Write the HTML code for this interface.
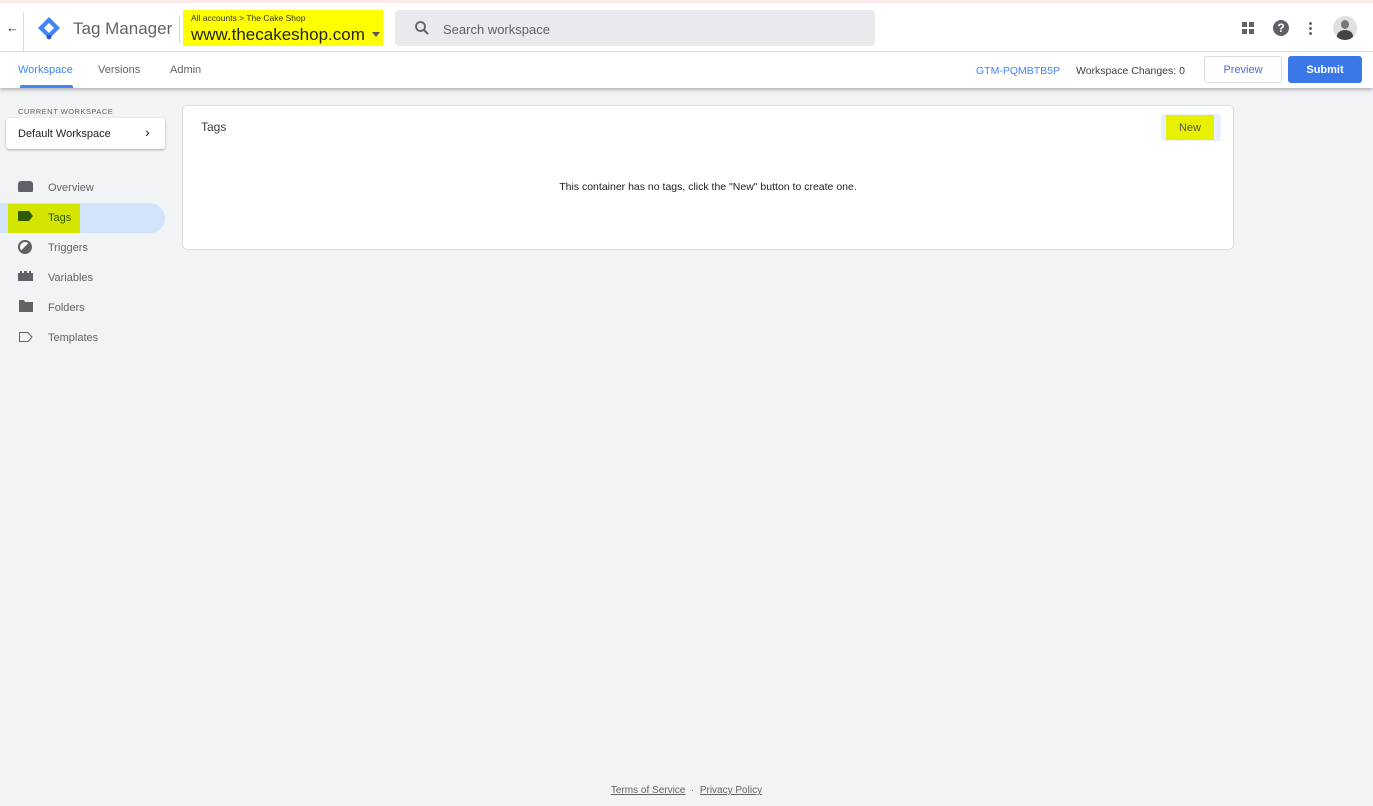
<!DOCTYPE html>
<html><head><meta charset="utf-8"><style>
*{box-sizing:border-box;margin:0;padding:0}
body{width:1373px;height:806px;background:#f1f3f4;font-family:"Liberation Sans",sans-serif;position:relative;overflow:hidden;color:#3c4043}
.abs{position:absolute}
#top{left:0;top:0;width:1373px;height:52px;background:#fff;border-top:3px solid #fbe9e7;border-bottom:1px solid #dadce0}
#sub{left:0;top:52px;width:1373px;height:36px;background:#fff;box-shadow:0 2px 3px rgba(0,0,0,.25)}
.nav{font-size:11px;color:#5f6368;left:48px}
</style></head><body>
<div id="top" class="abs"></div>
<div class="abs" style="left:23px;top:12px;width:1px;height:40px;background:#dadce0"></div>
<div class="abs" style="left:6px;top:20px;font-size:13px;color:#333">←</div>
<svg class="abs" style="left:37px;top:16px" width="24" height="24" viewBox="0 0 24 24"><path d="M12 1 L23 12 L12 23 L1 12Z" fill="#4285f4"/><path d="M12 7 L17 12 L12 17 L7 12Z" fill="#fff"/><circle cx="12" cy="21" r="2.4" fill="#2a56c6"/></svg>
<div class="abs" style="left:73px;top:19px;font-size:17px;color:#5f6368">Tag Manager</div>
<div class="abs" style="left:179px;top:16px;width:1px;height:28px;background:#dadce0"></div>
<div class="abs" style="left:183px;top:10px;width:200px;height:36px;background:#ffff00"></div>
<div class="abs" style="left:191px;top:13px;font-size:8.5px;color:#333">All accounts &gt; The Cake Shop</div>
<div class="abs" style="left:191px;top:25px;font-size:17px;color:#222">www.thecakeshop.com</div>
<div class="abs" style="left:372px;top:32px;border:4px solid transparent;border-top:5px solid #555"></div>
<div class="abs" style="left:395px;top:10px;width:480px;height:36px;background:#e8eaed;border-radius:4px"></div>
<svg class="abs" style="left:414px;top:20px" width="16" height="16" viewBox="0 0 16 16"><circle cx="6.5" cy="6.5" r="4.5" fill="none" stroke="#5f6368" stroke-width="1.8"/><path d="M10 10L14 14" stroke="#5f6368" stroke-width="2"/></svg>
<div class="abs" style="left:443px;top:22px;font-size:13px;color:#5f6368">Search workspace</div>
<svg class="abs" style="left:1241px;top:21px" width="14" height="14"><rect x="1" y="1" width="5" height="5" fill="#5f6368"/><rect x="8" y="1" width="5" height="5" fill="#5f6368"/><rect x="1" y="8" width="5" height="5" fill="#5f6368"/><rect x="8" y="8" width="5" height="5" fill="#5f6368"/></svg>
<div class="abs" style="left:1273px;top:20px;width:16px;height:16px;border-radius:50%;background:#5f6368;color:#fff;font-size:12px;font-weight:bold;text-align:center;line-height:16px">?</div>
<div class="abs" style="left:1309px;top:21px;width:3px;height:14px;background:radial-gradient(circle,#5f6368 1.3px,transparent 1.6px) 0 0/3px 5px"></div>
<div class="abs" style="left:1333px;top:16px;width:24px;height:24px;border-radius:50%;background:#e0e0e0;overflow:hidden"><div style="position:absolute;left:8px;top:4px;width:8px;height:9px;border-radius:50%;background:#777"></div><div style="position:absolute;left:4px;top:14px;width:16px;height:12px;border-radius:50% 50% 0 0;background:#444"></div></div>
<div id="sub" class="abs"></div>
<div class="abs" style="left:18px;top:64px;font-size:11px;color:#4285f4">Workspace</div>
<div class="abs" style="left:20px;top:85px;width:53px;height:3px;background:#4285f4;border-radius:2px 2px 0 0"></div>
<div class="abs" style="left:98px;top:64px;font-size:11px;color:#5f6368">Versions</div>
<div class="abs" style="left:170px;top:64px;font-size:11px;color:#5f6368">Admin</div>
<div class="abs" style="left:976px;top:65px;font-size:10.5px;color:#4285f4">GTM-PQMBTB5P</div>
<div class="abs" style="left:1076px;top:65px;font-size:10.5px;color:#3c4043">Workspace Changes: 0</div>
<div class="abs" style="left:1204px;top:56px;width:78px;height:27px;border:1px solid #dadce0;border-radius:3px;font-size:11px;color:#4a67e0;text-align:center;line-height:27px">Preview</div>
<div class="abs" style="left:1288px;top:56px;width:74px;height:27px;background:#3b78e7;border-radius:3px;font-size:11px;color:#fff;font-weight:bold;text-align:center;line-height:29px">Submit</div>
<div class="abs" style="left:18px;top:107px;font-size:7.5px;letter-spacing:.5px;color:#5f6368">CURRENT WORKSPACE</div>
<div class="abs" style="left:6px;top:118px;width:159px;height:31px;background:#fff;border-radius:3px;box-shadow:0 1px 2px rgba(0,0,0,.3)"></div>
<div class="abs" style="left:18px;top:128px;font-size:11px;color:#222">Default Workspace</div>
<div class="abs" style="left:145px;top:124px;font-size:14px;color:#222">›</div>
<div class="abs" style="left:0;top:203px;width:165px;height:30px;background:#d2e3fc;border-radius:0 15px 15px 0"></div>
<div class="abs" style="left:8px;top:204px;width:72px;height:29px;background:#d4e600"></div>
<div class="abs" style="left:18px;top:181px;width:15px;height:11px;background:#5f6368;border-radius:3px 3px 1px 1px"></div>
<svg class="abs" style="left:18px;top:211px" width="15" height="10"><path d="M0 0H11L15 5L11 10H0Z" fill="#2d5a00"/></svg>
<div class="abs" style="left:18px;top:240px;width:14px;height:14px;border:2px solid #5f6368;border-radius:50%;background:linear-gradient(135deg,#fff 45%,#5f6368 50%)"></div>
<svg class="abs" style="left:18px;top:271px" width="15" height="10"><path d="M0 2H2V0H4V2H6V0H9V2H11V0H13V2H15V10H0Z" fill="#5f6368"/></svg>
<svg class="abs" style="left:19px;top:300px" width="14" height="12"><path d="M0 0H5L6 2H14V12H0Z" fill="#5f6368"/></svg>
<svg class="abs" style="left:19px;top:332px" width="14" height="10"><path d="M0.5 0.5H9L13 5L9 9.5H0.5Z" fill="none" stroke="#5f6368"/></svg>
<div class="abs nav" style="top:182px">Overview</div>
<div class="abs nav" style="top:212px;color:#2d5a00">Tags</div>
<div class="abs nav" style="top:242px">Triggers</div>
<div class="abs nav" style="top:272px">Variables</div>
<div class="abs nav" style="top:302px">Folders</div>
<div class="abs nav" style="top:332px">Templates</div>
<div class="abs" style="left:182px;top:105px;width:1052px;height:145px;background:#fff;border:1px solid #dadce0;border-radius:5px"></div>
<div class="abs" style="left:201px;top:120px;font-size:12px;color:#3c4043">Tags</div>
<div class="abs" style="left:1161px;top:114px;width:60px;height:27px;background:#e8f0fe;border-radius:3px"></div>
<div class="abs" style="left:1166px;top:115px;width:48px;height:25px;background:#e6f000;font-size:11px;color:#555;text-align:center;line-height:26px">New</div>
<div class="abs" style="left:182px;top:181px;width:1052px;text-align:center;font-size:10.5px;color:#222">This container has no tags, click the "New" button to create one.</div>
<div class="abs" style="left:0;top:785px;width:1373px;text-align:center;font-size:10px;color:#5f6368"><u>Terms of Service</u> &nbsp;·&nbsp; <u>Privacy Policy</u></div>
</body></html>
